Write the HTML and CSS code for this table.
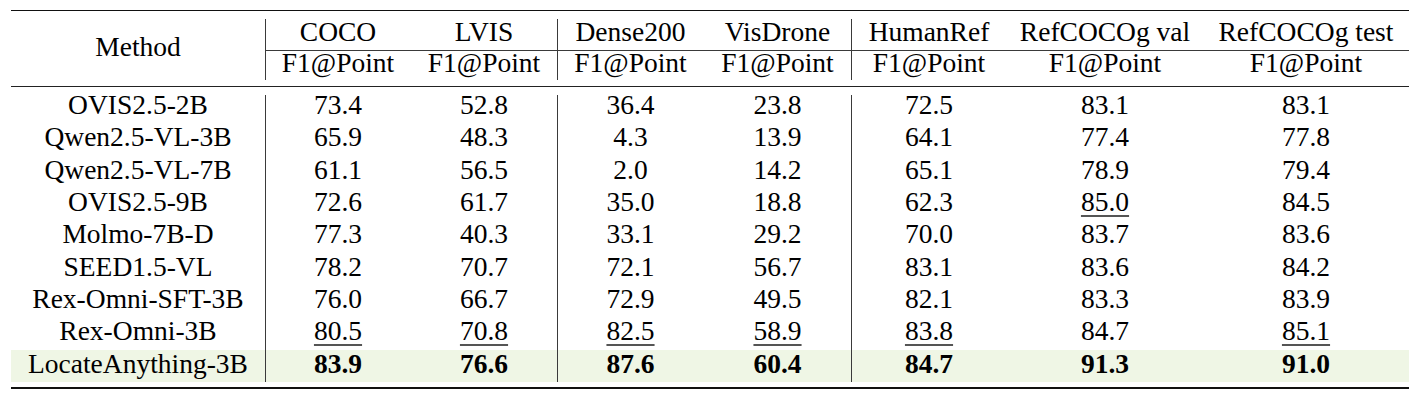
FILE: index.html
```html
<!DOCTYPE html>
<html lang="en">
<head>
<meta charset="utf-8">
<title>F1@Point results</title>
<link rel="stylesheet" href="styles.css">
</head>
<body>
<div class="page">
  <div class="rules">
    <table class="results">
      <colgroup>
        <col class="c-method">
        <col class="c-coco">
        <col class="c-lvis">
        <col class="c-dense">
        <col class="c-vis">
        <col class="c-human">
        <col class="c-val">
        <col class="c-test">
      </colgroup>
      <thead>
        <tr class="h1">
          <th class="method" rowspan="2">Method</th>
          <th class="vl">COCO</th>
          <th>LVIS</th>
          <th class="vl">Dense200</th>
          <th>VisDrone</th>
          <th class="vl">HumanRef</th>
          <th>RefCOCOg val</th>
          <th>RefCOCOg test</th>
        </tr>
        <tr class="h2">
          <th class="vl">F1@Point</th>
          <th>F1@Point</th>
          <th class="vl">F1@Point</th>
          <th>F1@Point</th>
          <th class="vl">F1@Point</th>
          <th>F1@Point</th>
          <th>F1@Point</th>
        </tr>
      </thead>
      <tbody>
        <tr class="first">
          <td>OVIS2.5-2B</td><td class="vl">73.4</td><td>52.8</td><td class="vl">36.4</td><td>23.8</td><td class="vl">72.5</td><td>83.1</td><td>83.1</td>
        </tr>
        <tr>
          <td>Qwen2.5-VL-3B</td><td class="vl">65.9</td><td>48.3</td><td class="vl">4.3</td><td>13.9</td><td class="vl">64.1</td><td>77.4</td><td>77.8</td>
        </tr>
        <tr>
          <td>Qwen2.5-VL-7B</td><td class="vl">61.1</td><td>56.5</td><td class="vl">2.0</td><td>14.2</td><td class="vl">65.1</td><td>78.9</td><td>79.4</td>
        </tr>
        <tr>
          <td>OVIS2.5-9B</td><td class="vl">72.6</td><td>61.7</td><td class="vl">35.0</td><td>18.8</td><td class="vl">62.3</td><td><span class="second">85.0</span></td><td>84.5</td>
        </tr>
        <tr>
          <td>Molmo-7B-D</td><td class="vl">77.3</td><td>40.3</td><td class="vl">33.1</td><td>29.2</td><td class="vl">70.0</td><td>83.7</td><td>83.6</td>
        </tr>
        <tr>
          <td>SEED1.5-VL</td><td class="vl">78.2</td><td>70.7</td><td class="vl">72.1</td><td>56.7</td><td class="vl">83.1</td><td>83.6</td><td>84.2</td>
        </tr>
        <tr>
          <td>Rex-Omni-SFT-3B</td><td class="vl">76.0</td><td>66.7</td><td class="vl">72.9</td><td>49.5</td><td class="vl">82.1</td><td>83.3</td><td>83.9</td>
        </tr>
        <tr>
          <td>Rex-Omni-3B</td><td class="vl"><span class="second">80.5</span></td><td><span class="second">70.8</span></td><td class="vl"><span class="second">82.5</span></td><td><span class="second">58.9</span></td><td class="vl"><span class="second">83.8</span></td><td>84.7</td><td><span class="second">85.1</span></td>
        </tr>
        <tr class="ours">
          <td>LocateAnything-3B</td><td class="vl best">83.9</td><td class="best">76.6</td><td class="vl best">87.6</td><td class="best">60.4</td><td class="vl best">84.7</td><td class="best">91.3</td><td class="best">91.0</td>
        </tr>
      </tbody>
    </table>
  </div>
</div>
</body>
</html>
```

FILE: styles.css
```css
html, body {
  margin: 0;
  padding: 0;
  background: #ffffff;
}

.page {
  padding: 9.5px 7px 0 11px;
  font-family: "Liberation Serif", "Times New Roman", serif;
  font-size: 27.5px;
  color: #000;
}

.rules {
  width: 1398px;
  border-top: 1.5px solid #111;
  border-bottom: 2px solid #111;
  padding-bottom: 5px;
}

.results {
  width: 1398px;
  table-layout: fixed;
  border-collapse: separate;
  border-spacing: 0;
}

.c-method { width: 254px; }
.c-coco   { width: 146px; }
.c-lvis   { width: 146px; }
.c-dense  { width: 147px; }
.c-vis    { width: 147px; }
.c-human  { width: 156px; }
.c-val    { width: 196px; }
.c-test   { width: 206px; }

.results th,
.results td {
  padding: 0;
  text-align: center;
  white-space: nowrap;
  font-weight: normal;
  background-repeat: no-repeat;
}

/* header row 1 */
.results .h1 th {
  line-height: 28px;
  padding-top: 7.4px;
  padding-bottom: 4.6px;
  border-bottom: 1px solid #3a3a3a;
}

.results .h1 th.method {
  border-bottom: 1px solid #222;
  vertical-align: middle;
  padding: 0 0 3px 0;
}

.results .h1 th.vl {
  background-image: linear-gradient(#3a3a3a, #3a3a3a);
  background-position: left bottom;
  background-size: 1px calc(100% - 8px);
}

/* header row 2 */
.results .h2 th {
  line-height: 24.4px;
  padding-top: 0;
  padding-bottom: 10.6px;
  border-bottom: 1px solid #222;
}

.results .h2 th.vl {
  background-image: linear-gradient(#3a3a3a, #3a3a3a);
  background-position: left top;
  background-size: 1px calc(100% - 6px);
}

/* body rows */
.results tbody td {
  line-height: 28px;
  padding-top: 0;
  padding-bottom: 4.3px;
}

.results tbody td.vl {
  background-image: linear-gradient(#3a3a3a, #3a3a3a);
  background-position: left top;
  background-size: 1px 100%;
}

.results tbody tr.first td {
  padding-top: 3.7px;
}

.results tbody tr.first td.vl {
  background-position: left bottom;
  background-size: 1px calc(100% - 8px);
}

.results .ours td {
  background-color: #eff6e5;
}

.results td.best {
  font-weight: bold;
}

.second {
  text-decoration: underline;
  text-decoration-thickness: 1.5px;
  text-decoration-color: #555;
  text-underline-offset: 4px;
}
```
